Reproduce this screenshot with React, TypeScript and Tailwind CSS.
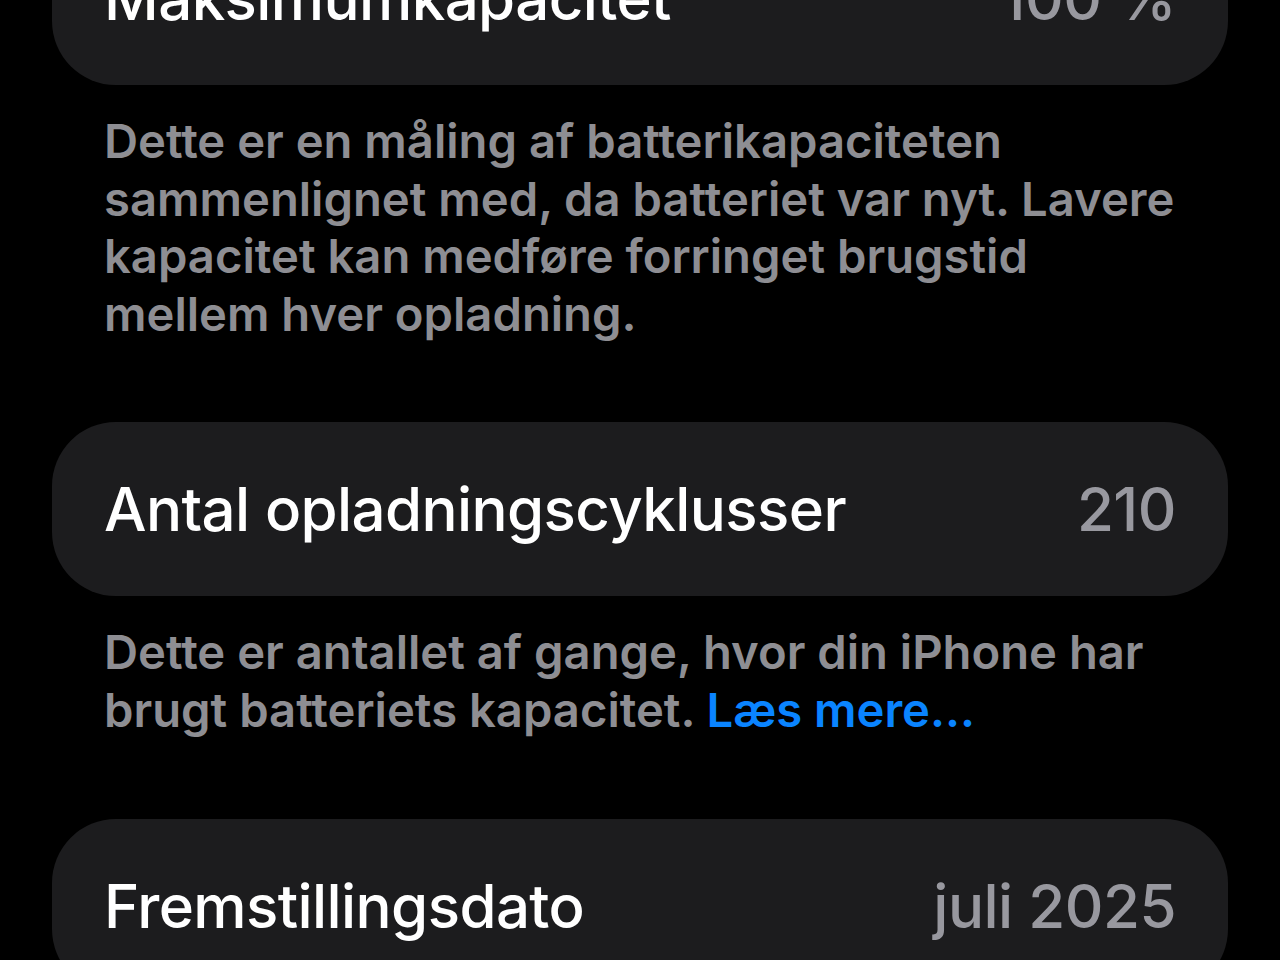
import React from 'react';

interface RowProps {
  label: string;
  value: string;
}

function InfoRow({ label, value }: RowProps) {
  return (
    <div className="flex h-[174px] items-center justify-between rounded-[64px] bg-[#1c1c1e] px-[52px]">
      <span className="text-[60px] font-medium tracking-[-0.6px] text-white">{label}</span>
      <span className="text-[60px] font-medium tracking-[-0.5px] text-[#98989f]">{value}</span>
    </div>
  );
}

function Footnote({ children }: { children: React.ReactNode }) {
  return (
    <p className="mt-[27px] pl-[52px] pr-[44px] text-[47.2px] font-semibold leading-[57.5px] text-[#8e8e93]">
      {children}
    </p>
  );
}

export default function App() {
  return (
    <div
      className="h-[960px] w-[1280px] overflow-hidden bg-black"
      style={{ fontFamily: 'Inter, "Noto Sans", sans-serif' }}
    >
      <div className="-mt-[89px] flex flex-col px-[52px]">
        <InfoRow label="Maksimumkapacitet" value="100 %" />
        <Footnote>
          Dette er en måling af batterikapaciteten sammenlignet med, da batteriet var nyt. Lavere
          kapacitet kan medføre forringet brugstid mellem hver opladning.
        </Footnote>

        <div className="mt-[80px]">
          <InfoRow label="Antal opladningscyklusser" value="210" />
        </div>
        <Footnote>
          Dette er antallet af gange, hvor din iPhone har brugt batteriets kapacitet.{' '}
          <span className="text-[#0a84ff]">Læs mere...</span>
        </Footnote>

        <div className="mt-[81px]">
          <InfoRow label="Fremstillingsdato" value="juli 2025" />
        </div>
      </div>
    </div>
  );
}
